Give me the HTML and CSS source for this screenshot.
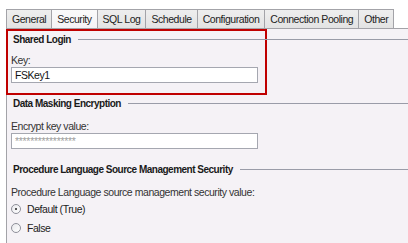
FILE: index.html
```html
<!DOCTYPE html>
<html lang="en">
<head>
  <meta charset="UTF-8" />
  <title>Connection Properties</title>
  <link rel="stylesheet" href="styles.css">
</head>
<body>
  <!-- Tab strip -->
  <div class="tabs">
    <div class="tab">General</div>
    <div class="tab active">Security</div>
    <div class="tab">SQL Log</div>
    <div class="tab">Schedule</div>
    <div class="tab">Configuration</div>
    <div class="tab">Connection Pooling</div>
    <div class="tab">Other</div>
  </div>

  <!-- Security tab content -->
  <div class="panel">
    <div class="highlight">
      <div class="group-title"><span>Shared Login</span></div>
      <div class="field">
        <label>Key:</label>
        <input type="text" class="textbox" value="FSKey1" />
      </div>
    </div>

    <div class="group-title"><span>Data Masking Encryption</span></div>
    <div class="field">
      <label>Encrypt key value:</label>
      <input type="text" class="textbox masked" value="****************" />
    </div>

    <div class="group-title spaced"><span>Procedure Language Source Management Security</span></div>
    <div class="field">
      <label>Procedure Language source management security value:</label>
    </div>
    <div class="radio"><span class="dot checked"></span>Default (True)</div>
    <div class="radio"><span class="dot"></span>False</div>
  </div>
</body>
</html>
```

FILE: styles.css
```css
/* Global */
body {
  margin: 0;
  background: #fff;
  font-family: 'Liberation Sans', Arial, sans-serif;
  font-size: 10.5px;
  letter-spacing: -0.45px;
  color: #222;
  height: 243px;
  overflow: hidden;
}
/* Tabs */
.tabs {
  display: flex;
  padding: 9px 0 0 6px;
}
.tab {
  height: 18px;
  line-height: 18px;
  padding: 0 5px;
  white-space: nowrap;
  border: 1px solid #a3a3a8;
  border-bottom: none;
  border-left: none;
  background: linear-gradient(#eeeeee, #e3e3e3);
  color: #222;
}
.tab:first-child {
  border-left: 1px solid #a3a3a8;
}
.tab.active {
  background: linear-gradient(#fafafa, #f4f2f5);
}
/* Tab panel */
.panel {
  margin-left: 6px;
  height: 220px;
  border-top: 1px solid #a3a3a8;
  border-left: 1px solid #a3a3a8;
  background: #f5f2f6;
}
.highlight {
  width: 257px;
  margin-left: -1px;
  border: 2px solid #c00000;
  padding-bottom: 10px;
}
.highlight .group-title {
  margin-right: -143px;
  padding-left: 5px;
}
.highlight .field {
  padding-left: 3px;
}
/* Group headers with a rule */
.group-title {
  display: flex;
  align-items: center;
  height: 16px;
  padding-left: 6px;
  font-size: 10px;
  letter-spacing: -0.5px;
  font-weight: bold;
  color: #1a1a1a;
}
.group-title::after {
  content: '';
  flex: 1;
  height: 1px;
  margin-left: 7px;
  background: #9a9ca8;
}
.group-title.spaced {
  margin-top: 12px;
}
.field {
  padding: 6px 0 0 4px;
}
.panel > .field {
  padding-top: 8px;
}
.field label {
  display: block;
  height: 14px;
  line-height: 14px;
  color: #333;
}
.textbox {
  display: block;
  box-sizing: border-box;
  width: 247px;
  height: 16px;
  margin: 0;
  padding: 0 3px;
  border: 1px solid #a5a7b0;
  background: #fff;
  font-family: inherit;
  font-size: 10.5px;
  letter-spacing: -0.45px;
  color: #111;
}
.textbox.masked {
  color: #a0a0a0;
  letter-spacing: -0.3px;
}
/* Radio buttons */
.radio {
  display: flex;
  align-items: center;
  padding-left: 4px;
  height: 19px;
  color: #222;
}
.dot {
  width: 10px;
  height: 10px;
  box-sizing: border-box;
  margin-right: 6px;
  border: 1px solid #8e8f99;
  border-radius: 50%;
  background: linear-gradient(135deg, #e8e8ec, #fff);
  position: relative;
}
.dot.checked::after {
  content: '';
  position: absolute;
  left: 3px;
  top: 3px;
  width: 2px;
  height: 2px;
  border-radius: 50%;
  background: #222;
}
```
